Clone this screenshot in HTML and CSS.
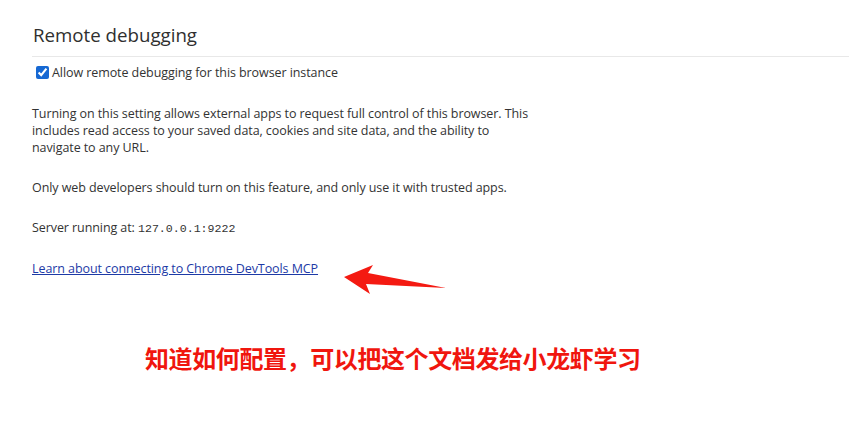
FILE: index.html
```html
<!DOCTYPE html>
<html lang="en">

<head>
  <meta charset="UTF-8" />
  <title>Remote debugging</title>
  <link rel="stylesheet" href="styles.css">
</head>

<body>
  <div class="section">
    <h2 class="section-title">Remote debugging</h2>
    <label class="check-row">
      <input type="checkbox" checked>
      <span>Allow remote debugging for this browser instance</span>
    </label>
    <p class="desc">Turning on this setting allows external apps to request full control of this browser. This
      includes read access to your saved data, cookies and site data, and the ability to navigate to any URL.</p>
    <p class="desc">Only web developers should turn on this feature, and only use it with trusted apps.</p>
    <p class="desc">Server running at: <span class="addr">127.0.0.1:9222</span></p>
    <p class="desc"><a href="#">Learn about connecting to Chrome DevTools MCP</a></p>
  </div>

  <div class="note">知道如何配置，可以把这个文档发给小龙虾学习</div>

  <svg class="arrow" width="110" height="40" viewBox="340 260 110 40">
    <polygon points="344,277 373,265 368,273 446,288 366,284 370,294" fill="#f41a12" />
  </svg>
</body>

</html>
```

FILE: styles.css
```css
body {
  margin: 0;
  background-color: #ffffff;
  font-family: "Open Sans", "Noto Sans", sans-serif;
  color: #333333;
  position: relative;
}

.section {
  padding-left: 32px;
}

.section-title {
  margin: 0;
  padding: 21px 0 7px 1px;
  font-size: 18.7px;
  font-weight: 400;
  line-height: 28px;
  color: #2f2f2f;
  border-bottom: 1px solid #e8e8e8;
}

.check-row {
  display: flex;
  align-items: center;
  height: 20px;
  margin-top: 5px;
  font-size: 12.5px;
  letter-spacing: -0.08px;
}

.check-row input {
  margin: 0 3px 0 4px;
  width: 13px;
  height: 13px;
  accent-color: #1668d3;
}

.desc {
  margin: 23px 0 0 0;
  max-width: 505px;
  font-size: 12.5px;
  letter-spacing: -0.08px;
  line-height: 17px;
}

.addr {
  font-family: "Liberation Mono", monospace;
  font-size: 11.6px;
  letter-spacing: 0;
}

.desc a {
  color: #1d3aa6;
}

.note {
  margin: 66px 0 0 145px;
  font-family: "Noto Sans CJK SC", sans-serif;
  font-size: 24px;
  font-weight: 700;
  line-height: 30px;
  letter-spacing: -0.4px;
  color: #f0160e;
}

.arrow {
  position: absolute;
  left: 340px;
  top: 260px;
}
```
